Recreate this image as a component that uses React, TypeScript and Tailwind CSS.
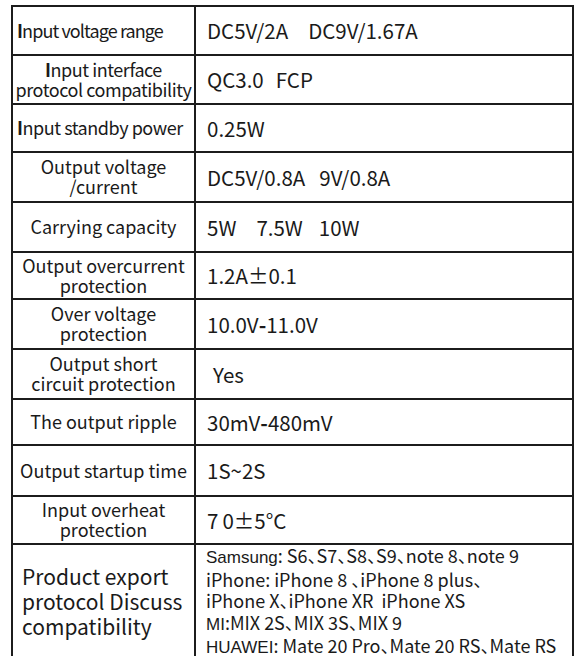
import React from "react";

const L = "font-['Noto_Sans_CJK_SC',sans-serif]";
const A = "font-['Liberation_Sans',Arial,sans-serif] text-[17px]";

function LeftCell({ children, className = "" }: { children: React.ReactNode; className?: string }) {
  return (
    <div className={`bg-white flex items-center pb-[2px] whitespace-nowrap text-[18px] leading-[20px] text-[#1a1a1a] ${L} ${className}`}>
      {children}
    </div>
  );
}

function RightCell({ children, className = "" }: { children: React.ReactNode; className?: string }) {
  return (
    <div className={`bg-white flex items-center pb-[1px] pl-[11px] whitespace-nowrap text-[20.5px] leading-[22px] text-[#1a1a1a] ${L} ${className}`}>
      {children}
    </div>
  );
}

function Gap({ w }: { w: string }) {
  return <span className={`inline-block ${w}`} />;
}

function Dun() {
  return <span className="tracking-[-0.5em]">、</span>;
}

export default function App() {
  return (
    <div className="w-[581px] h-[663px] bg-white pt-[5px] pl-[11px]">
      <div className="w-[563px] h-[651px] bg-[#1c1c1c] p-[2px] grid grid-cols-[181px_1fr] grid-rows-[47px_47px_46px_48px_48px_45px_48px_48px_44px_49px_46px_1fr] gap-[2px]">
        <LeftCell className="pl-[4px] tracking-[-0.9px]">
          <span><b className="font-bold">I</b>nput voltage range</span>
        </LeftCell>
        <RightCell>
          DC5V/2A<Gap w="w-[20px]" />DC9V/1.67A
        </RightCell>

        <LeftCell className="justify-center text-center tracking-[-0.45px]">
          <span><b className="font-bold">I</b>nput interface<br />protocol compatibility</span>
        </LeftCell>
        <RightCell>
          QC3.0<Gap w="w-[12px]" />FCP
        </RightCell>

        <LeftCell className="pl-[4px] tracking-[-0.45px]">
          <span><b className="font-bold">I</b>nput standby power</span>
        </LeftCell>
        <RightCell>0.25W</RightCell>

        <LeftCell className="justify-center text-center">
          <span>Output voltage<br />/current</span>
        </LeftCell>
        <RightCell>
          DC5V/0.8A<Gap w="w-[14px]" />9V/0.8A
        </RightCell>

        <LeftCell className="justify-center text-center">
          <span>Carrying capacity</span>
        </LeftCell>
        <RightCell>
          5W<Gap w="w-[20px]" />7.5W<Gap w="w-[16px]" />10W
        </RightCell>

        <LeftCell className="justify-center text-center">
          <span>Output overcurrent<br />protection</span>
        </LeftCell>
        <RightCell>1.2A±0.1</RightCell>

        <LeftCell className="justify-center text-center">
          <span>Over voltage<br />protection</span>
        </LeftCell>
        <RightCell>
          10.0V<span className="font-bold">-</span>11.0V
        </RightCell>

        <LeftCell className="justify-center text-center">
          <span>Output short<br />circuit protection</span>
        </LeftCell>
        <RightCell className="pl-[17px]">Yes</RightCell>

        <LeftCell className="justify-center text-center">
          <span>The output ripple</span>
        </LeftCell>
        <RightCell>
          30mV<span className="font-bold">-</span>480mV
        </RightCell>

        <LeftCell className="justify-center text-center">
          <span>Output startup time</span>
        </LeftCell>
        <RightCell>1S~2S</RightCell>

        <LeftCell className="justify-center text-center">
          <span>Input overheat<br />protection</span>
        </LeftCell>
        <RightCell>
          7<Gap w="w-[4px]" />0±5°C
        </RightCell>

        <div className={`bg-white flex items-center pl-[9px] whitespace-nowrap text-[21px] leading-[25px] text-[#1a1a1a] ${L}`}>
          <span>Product export<br />protocol Discuss<br />compatibility</span>
        </div>
        <div className={`bg-white flex flex-col justify-center pl-[10px] whitespace-nowrap text-[18px] leading-[21.5px] text-[#1a1a1a] ${L}`}>
          <div>
            <span className={A}>Samsung</span>: S6<Dun />S7<Dun />S8<Dun />S9<Dun />note 8<Dun />note 9
          </div>
          <div>
            iPhone: iPhone 8 <Dun />iPhone 8 plus<Dun />
          </div>
          <div>
            iPhone X<Dun />iPhone XR<Gap w="w-[8px]" />iPhone XS
          </div>
          <div>
            <span className={A}>MI</span>:MIX 2S<Dun />MIX 3S<Dun />MIX 9
          </div>
          <div>
            <span className={A}>HUAWEI</span>: Mate 20 Pro<Dun />Mate 20 RS<Dun />Mate RS
          </div>
        </div>
      </div>
    </div>
  );
}
